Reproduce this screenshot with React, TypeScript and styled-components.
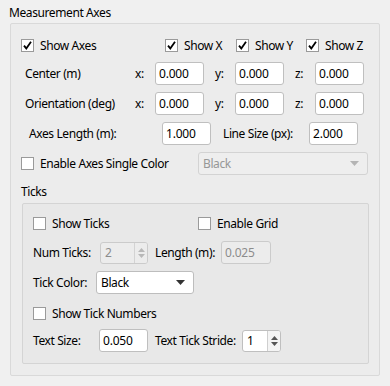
import React from "react";
import styled, { createGlobalStyle } from "styled-components";

const GlobalStyle = createGlobalStyle`
  html, body {
    margin: 0;
    padding: 0;
    background: #f0f0f0;
  }
  body {
    font-family: "Noto Sans", "Open Sans", sans-serif;
    font-size: 12px;
    letter-spacing: -0.4px;
    color: #000;
  }
  * { box-sizing: border-box; }
`;

const Page = styled.div`
  width: 390px;
  height: 386px;
  padding: 5px 10px 10px 10px;
`;

const GroupTitle = styled.div<{ $indent: number; $mt?: number }>`
  margin-left: ${(p) => p.$indent}px;
  margin-top: ${(p) => p.$mt ?? 0}px;
  line-height: 16px;
  height: 16px;
  white-space: nowrap;
`;

const GroupFrame = styled.div<{ $inner?: boolean }>`
  border: 1px solid ${(p) => (p.$inner ? "#d4d4d4" : "#d9d9d9")};
  border-radius: 2px;
  background: ${(p) => (p.$inner ? "#e8e8e8" : "#ececec")};
  margin: ${(p) => (p.$inner ? "3px 10px 0 11px" : "2px 0 0 0")};
  padding: ${(p) => (p.$inner ? "8px 0 11px 0" : "10px 0 11px 0")};
`;

const Row = styled.div<{ $indent: number; $mt?: number }>`
  display: flex;
  align-items: center;
  height: 23px;
  padding-left: ${(p) => p.$indent}px;
  margin-top: ${(p) => p.$mt ?? 0}px;
`;

const Label = styled.span<{ $w: number; $ml?: number }>`
  width: ${(p) => p.$w}px;
  margin-left: ${(p) => p.$ml ?? 0}px;
  flex: none;
  white-space: nowrap;
  line-height: 16px;
`;

const TextInput = styled.input<{ $w: number }>`
  width: ${(p) => p.$w}px;
  height: 23px;
  flex: none;
  border: 1px solid ${(p) => (p.disabled ? "#cbcbcb" : "#bfbfbf")};
  border-radius: 3px;
  background: ${(p) => (p.disabled ? "#ececec" : "#ffffff")};
  color: ${(p) => (p.disabled ? "#8c8c8c" : "#000")};
  font: inherit;
  letter-spacing: -0.2px;
  padding: 0 0 0 3px;
  outline: none;
`;

const CheckWrap = styled.label<{ $w?: number }>`
  display: flex;
  align-items: center;
  width: ${(p) => (p.$w ? `${p.$w}px` : "auto")};
  flex: none;
  white-space: nowrap;
`;

const Box = styled.span`
  width: 13px;
  height: 13px;
  border: 1px solid #9a9a9a;
  background: #fff;
  display: inline-flex;
  align-items: center;
  justify-content: center;
  margin-right: 6px;
  flex: none;
`;

const Combo = styled.div<{ $w: number; $disabled?: boolean }>`
  width: ${(p) => p.$w}px;
  height: 23px;
  flex: none;
  display: flex;
  align-items: center;
  justify-content: space-between;
  border: 1px solid ${(p) => (p.$disabled ? "#d3d3d3" : "#bdbdbd")};
  border-radius: 3px;
  background: ${(p) => (p.$disabled ? "#eeeeee" : "#ffffff")};
  color: ${(p) => (p.$disabled ? "#979797" : "#000")};
  padding: 0 8px 0 4px;
`;

const Spin = styled.div<{ $w: number; $disabled?: boolean }>`
  width: ${(p) => p.$w}px;
  height: 22px;
  flex: none;
  display: flex;
  border: 1px solid ${(p) => (p.$disabled ? "#cbcbcb" : "#bfbfbf")};
  border-radius: 3px;
  background: ${(p) => (p.$disabled ? "#ececec" : "#ffffff")};
  color: ${(p) => (p.$disabled ? "#8c8c8c" : "#000")};
  overflow: hidden;
`;

const SpinText = styled.span`
  flex: 1;
  display: flex;
  align-items: center;
  padding-left: 4px;
`;

const SpinButtons = styled.span<{ $disabled?: boolean }>`
  width: 13px;
  flex: none;
  border-left: 1px solid ${(p) => (p.$disabled ? "#d3d3d3" : "#cfcfcf")};
  background: ${(p) => (p.$disabled ? "#ececec" : "#f4f4f4")};
  display: flex;
  align-items: center;
  justify-content: center;
`;

const Check = ({ checked, label, w }: { checked?: boolean; label: string; w?: number }) => (
  <CheckWrap $w={w}>
    <Box>
      {checked && (
        <svg width="11" height="11" viewBox="0 0 11 11">
          <path d="M2 5.6 L4.3 8.4 L9 1.8" fill="none" stroke="#000" strokeWidth="1.8" />
        </svg>
      )}
    </Box>
    {label}
  </CheckWrap>
);

const Arrow = ({ color }: { color: string }) => (
  <svg width="9" height="5" viewBox="0 0 9 5">
    <path d="M0 0 H9 L4.5 5 Z" fill={color} />
  </svg>
);

const UpDown = ({ color }: { color: string }) => (
  <svg width="7" height="14" viewBox="0 0 7 14">
    <path d="M0 6 L3.5 2 L7 6 Z" fill={color} />
    <path d="M0 8 L3.5 12 L7 8 Z" fill={color} />
  </svg>
);

const XYZRow = ({ label, mt }: { label: string; mt: number }) => (
  <Row $indent={14} $mt={mt}>
    <Label $w={110}>{label}</Label>
    <Label $w={20}>x:</Label>
    <TextInput $w={49} defaultValue="0.000" />
    <Label $w={20} $ml={11}>y:</Label>
    <TextInput $w={49} defaultValue="0.000" />
    <Label $w={20} $ml={11}>z:</Label>
    <TextInput $w={49} defaultValue="0.000" />
  </Row>
);

export default function App() {
  return (
    <>
      <GlobalStyle />
      <Page>
        <GroupTitle $indent={-1}>Measurement Axes</GroupTitle>
        <GroupFrame>
          <Row $indent={10}>
            <Check checked label="Show Axes" w={144} />
            <Check checked label="Show X" w={71} />
            <Check checked label="Show Y" w={70} />
            <Check checked label="Show Z" />
          </Row>
          <XYZRow label="Center (m)" mt={5} />
          <XYZRow label="Orientation (deg)" mt={7} />
          <Row $indent={18} $mt={7}>
            <Label $w={133}>Axes Length (m):</Label>
            <TextInput $w={49} defaultValue="1.000" />
            <Label $w={86} $ml={12}>Line Size (px):</Label>
            <TextInput $w={49} defaultValue="2.000" />
          </Row>
          <Row $indent={10} $mt={7}>
            <Check label="Enable Axes Single Color" w={177} />
            <Combo $w={170} $disabled>
              <span>Black</span>
              <Arrow color="#b4b4b4" />
            </Combo>
          </Row>
          <GroupTitle $indent={10} $mt={9}>Ticks</GroupTitle>
          <GroupFrame $inner>
            <Row $indent={10}>
              <Check label="Show Ticks" w={165} />
              <Check label="Enable Grid" />
            </Row>
            <Row $indent={10} $mt={6}>
              <Label $w={67}>Num Ticks:</Label>
              <Spin $w={48} $disabled>
                <SpinText>2</SpinText>
                <SpinButtons $disabled>
                  <UpDown color="#b8b8b8" />
                </SpinButtons>
              </Spin>
              <Label $w={66} $ml={7}>Length (m):</Label>
              <TextInput $w={50} defaultValue="0.025" disabled />
            </Row>
            <Row $indent={10} $mt={7}>
              <Label $w={63}>Tick Color:</Label>
              <Combo $w={98}>
                <span>Black</span>
                <Arrow color="#333333" />
              </Combo>
            </Row>
            <Row $indent={10} $mt={8}>
              <Check label="Show Tick Numbers" />
            </Row>
            <Row $indent={10} $mt={4}>
              <Label $w={66}>Text Size:</Label>
              <TextInput $w={49} defaultValue="0.050" />
              <Label $w={87} $ml={7}>Text Tick Stride:</Label>
              <Spin $w={39}>
                <SpinText>1</SpinText>
                <SpinButtons>
                  <UpDown color="#555555" />
                </SpinButtons>
              </Spin>
            </Row>
          </GroupFrame>
        </GroupFrame>
      </Page>
    </>
  );
}
